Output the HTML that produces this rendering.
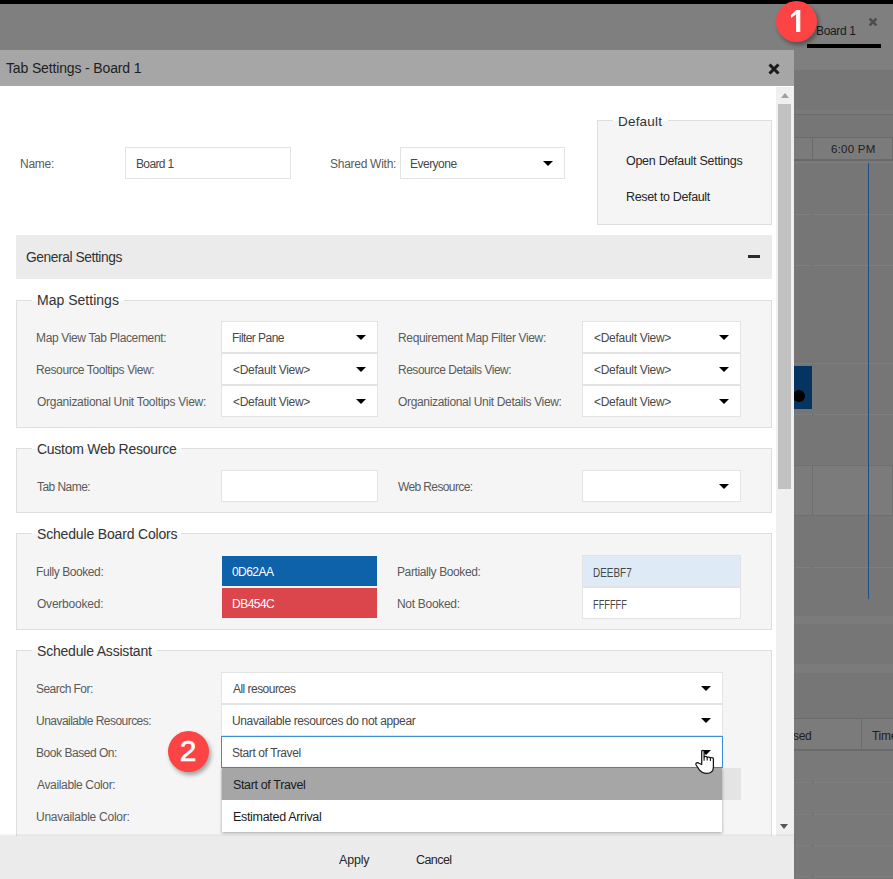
<!DOCTYPE html>
<html><head><meta charset="utf-8">
<style>
*{box-sizing:border-box;margin:0;padding:0}
html,body{width:893px;height:879px;overflow:hidden;background:#767676;font-family:"Liberation Sans",sans-serif;color:#333}
.a{position:absolute}
.t{position:absolute;white-space:nowrap;line-height:1}
.sel{position:absolute;background:#fff;border:1px solid #e3e3e3}
.arr{position:absolute;width:0;height:0;border-left:5px solid transparent;border-right:5px solid transparent;border-top:5px solid #000}
.fs{position:absolute;left:16px;width:756px;background:#f5f5f5;border:1px solid #dedede}
.gap{position:absolute;height:3px;background:#fff}
</style></head><body>
<!-- background board -->
<div class="a" style="left:0;top:0;width:893px;height:4px;background:#000"></div>
<div class="a" style="left:0;top:4px;width:893px;height:66px;background:#7f7f7f"></div>
<div class="a" style="left:794px;top:110px;width:99px;height:4px;background:#7a7a7a"></div>
<div class="a" style="left:794px;top:114px;width:99px;height:1px;background:#6c6c6c"></div>
<div class="a" style="left:794px;top:137px;width:99px;height:24px;background:#7b7b7b;border-top:1px solid #6a6a6a;border-bottom:2px solid #6a6a6a"></div>
<div class="a" style="left:812px;top:137px;width:1px;height:24px;background:#6a6a6a"></div>
<div class="a" style="left:892px;top:137px;width:1px;height:24px;background:#6a6a6a"></div>
<div class="a" style="left:794px;top:214px;width:99px;height:1px;background:#7e7e7e"></div><div class="a" style="left:812px;top:213px;width:1px;height:3px;background:#6e6e6e"></div>
<div class="a" style="left:794px;top:265px;width:99px;height:1px;background:#7e7e7e"></div><div class="a" style="left:812px;top:264px;width:1px;height:3px;background:#6e6e6e"></div>
<div class="a" style="left:794px;top:363px;width:99px;height:1px;background:#7e7e7e"></div><div class="a" style="left:812px;top:362px;width:1px;height:3px;background:#6e6e6e"></div>
<div class="a" style="left:794px;top:414px;width:99px;height:1px;background:#7e7e7e"></div><div class="a" style="left:812px;top:413px;width:1px;height:3px;background:#6e6e6e"></div>
<div class="a" style="left:794px;top:366px;width:18px;height:43px;background:#063461"></div>
<div class="a" style="left:793px;top:390px;width:12px;height:12px;border-radius:50%;background:#000"></div>
<div class="a" style="left:794px;top:465px;width:99px;height:51px;background:#7b7b7b;border-bottom:1px solid #6e6e6e;border-top:1px solid #707070"></div>
<div class="a" style="left:812px;top:465px;width:1px;height:51px;background:#6e6e6e"></div>
<div class="a" style="left:794px;top:567px;width:99px;height:1px;background:#7e7e7e"></div><div class="a" style="left:812px;top:566px;width:1px;height:3px;background:#6e6e6e"></div>
<div class="a" style="left:794px;top:616px;width:99px;height:8px;background:#7b7b7b"></div>
<div class="a" style="left:794px;top:664px;width:99px;height:9px;background:#7b7b7b"></div>
<div class="a" style="left:794px;top:750px;width:99px;height:129px;background:#797979"></div>
<div class="a" style="left:794px;top:718px;width:99px;height:33px;background:#7b7b7b;border-top:1px solid #6a6a6a;border-bottom:2px solid #6a6a6a"></div>
<div class="a" style="left:861px;top:718px;width:1px;height:33px;background:#6a6a6a"></div>
<div class="t" style="left:793px;top:730px;font-size:12px;letter-spacing:-0.3px;color:#1e1e1e">sed</div>
<div class="t" style="left:872px;top:730px;font-size:12px;letter-spacing:-0.3px;color:#1e1e1e">Time</div>
<div class="a" style="left:794px;top:782px;width:99px;height:1px;background:#7e7e7e"></div><div class="a" style="left:812px;top:781px;width:1px;height:3px;background:#6e6e6e"></div>
<div class="a" style="left:794px;top:814px;width:99px;height:1px;background:#7e7e7e"></div><div class="a" style="left:812px;top:813px;width:1px;height:3px;background:#6e6e6e"></div>
<div class="a" style="left:794px;top:845px;width:99px;height:1px;background:#7e7e7e"></div><div class="a" style="left:812px;top:844px;width:1px;height:3px;background:#6e6e6e"></div>
<div class="a" style="left:794px;top:876px;width:99px;height:1px;background:#7e7e7e"></div><div class="a" style="left:812px;top:875px;width:1px;height:3px;background:#6e6e6e"></div>
<div class="a" style="left:892px;top:465px;width:1px;height:51px;background:#6e6e6e"></div>
<div class="a" style="left:868px;top:162px;width:1px;height:437px;background:#1f4f80"></div>
<div class="a" style="left:794px;top:162px;width:99px;height:1px;background:#7e7e7e"></div>
<!-- tab -->
<svg class="a" style="left:868px;top:17px" width="10" height="10" viewBox="0 0 10 10"><path d="M1.6 1.6L8.4 8.4M8.4 1.6L1.6 8.4" stroke="#4d4d4d" stroke-width="2.6"/></svg>
<div class="a" style="left:807px;top:44px;width:74px;height:4px;background:#000"></div>

<!-- dialog -->
<div class="a" style="left:0;top:50px;width:794px;height:36px;background:#a6a6a6"></div>
<svg class="a" style="left:767px;top:62px" width="14" height="14" viewBox="0 0 14 14"><path d="M2.5 2.5L11.5 11.5M11.5 2.5L2.5 11.5" stroke="#1a1a1a" stroke-width="3"/></svg>
<div class="a" style="left:0;top:86px;width:794px;height:750px;background:#fff"></div>
<!-- scrollbar -->
<div class="a" style="left:776px;top:87px;width:18px;height:749px;background:#f0f0f0"></div>
<div class="arr" style="left:781px;top:93px;border-top:0;border-bottom:5px solid #a0a0a0;border-left-width:4px;border-right-width:4px"></div>
<div class="a" style="left:778px;top:104px;width:13px;height:385px;background:#c1c1c1"></div>
<div class="arr" style="left:780px;top:824px;border-top-color:#555;border-left-width:4px;border-right-width:4px"></div>

<!-- name row -->
<div class="sel" style="left:125px;top:147px;width:166px;height:32px"></div>
<div class="sel" style="left:400px;top:147px;width:165px;height:32px"><div class="arr" style="left:142px;top:13px"></div></div>

<!-- default fieldset -->
<div class="a" style="left:597px;top:120px;width:175px;height:105px;background:#f5f5f5;border:1px solid #dedede"></div>
<div class="gap" style="left:613px;top:120px;width:55px;height:1px"></div>

<!-- general settings -->
<div class="a" style="left:16px;top:235px;width:756px;height:44px;background:#ebebeb"></div>
<div class="a" style="left:748px;top:255px;width:12px;height:3px;background:#2a2a2a"></div>

<!-- Map settings -->
<div class="fs" style="top:300px;height:128px"></div>
<div class="gap" style="left:32px;top:300px;width:92px;height:1px"></div>
<div class="sel" style="left:221px;top:321px;width:157px;height:32px"><div class="arr" style="left:134px;top:13px"></div></div>
<div class="sel" style="left:221px;top:353px;width:157px;height:32px"><div class="arr" style="left:134px;top:13px"></div></div>
<div class="sel" style="left:221px;top:385px;width:157px;height:32px"><div class="arr" style="left:134px;top:13px"></div></div>
<div class="sel" style="left:582px;top:321px;width:159px;height:32px"><div class="arr" style="left:136px;top:13px"></div></div>
<div class="sel" style="left:582px;top:353px;width:159px;height:32px"><div class="arr" style="left:136px;top:13px"></div></div>
<div class="sel" style="left:582px;top:385px;width:159px;height:32px"><div class="arr" style="left:136px;top:13px"></div></div>

<!-- Custom web resource -->
<div class="fs" style="top:448px;height:65px"></div>
<div class="gap" style="left:32px;top:448px;width:149px;height:1px"></div>
<div class="sel" style="left:221px;top:470px;width:157px;height:32px"></div>
<div class="sel" style="left:582px;top:470px;width:159px;height:32px"><div class="arr" style="left:136px;top:13px"></div></div>

<!-- Schedule Board Colors -->
<div class="fs" style="top:533px;height:97px"></div>
<div class="gap" style="left:32px;top:533px;width:149px;height:1px"></div>
<div class="a" style="left:221px;top:555px;width:157px;height:32px;background:#0d62aa;border:1px solid #f4f4f4"></div>
<div class="a" style="left:221px;top:587px;width:157px;height:32px;background:#db454c;border:1px solid #f4f4f4"></div>
<div class="a" style="left:582px;top:555px;width:159px;height:32px;background:#deebf7;border:1px solid #e3e3e3"></div>
<div class="a" style="left:582px;top:587px;width:159px;height:32px;background:#fff;border:1px solid #e3e3e3"></div>

<!-- Schedule Assistant -->
<div class="fs" style="top:650px;height:220px"></div>
<div class="gap" style="left:32px;top:650px;width:125px;height:1px"></div>
<div class="sel" style="left:221px;top:672px;width:502px;height:32px"><div class="arr" style="left:479px;top:13px"></div></div>
<div class="sel" style="left:221px;top:704px;width:502px;height:32px"><div class="arr" style="left:479px;top:13px"></div></div>
<div class="a" style="left:221px;top:768px;width:520px;height:32px;background:#e4e4e4"></div>
<div class="sel" style="left:221px;top:736px;width:502px;height:32px;border-color:#3c8fd6"><div class="arr" style="left:479px;top:13px"></div></div>
<!-- dropdown list -->
<div class="a" style="left:222px;top:768px;width:500px;height:64px;background:#fff;box-shadow:0 1px 3px rgba(0,0,0,0.35)"></div>
<div class="a" style="left:222px;top:768px;width:500px;height:32px;background:#a6a6a6"></div>

<!-- footer -->
<div class="a" style="left:0;top:836px;width:794px;height:43px;background:#ebebeb;box-shadow:0 -1px 2px rgba(0,0,0,0.1)"></div>

<div class="t" style="left:6px;top:61px;font-size:14px;letter-spacing:-0.143px;color:#1e1e1e">Tab Settings - Board 1</div>
<div class="t" style="left:816px;top:25px;font-size:12px;letter-spacing:-0.333px;color:#1a1a1a">Board 1</div>
<div class="t" style="left:831px;top:144px;font-size:11.5px;letter-spacing:0.233px;color:#1e1e1e">6:00 PM</div>
<div class="t" style="left:20px;top:158px;font-size:12px;letter-spacing:-0.25px;color:#5a5a5a">Name:</div>
<div class="t" style="left:136px;top:158px;font-size:12px;letter-spacing:-0.633px;color:#484848">Board 1</div>
<div class="t" style="left:330px;top:158px;font-size:12px;letter-spacing:-0.273px;color:#5a5a5a">Shared With:</div>
<div class="t" style="left:410px;top:158px;font-size:12px;letter-spacing:-0.514px;color:#484848">Everyone</div>
<div class="t" style="left:618px;top:115px;font-size:13.5px;letter-spacing:0.2px;color:#333">Default</div>
<div class="t" style="left:626px;top:155px;font-size:12.5px;letter-spacing:-0.28px;color:#262626">Open Default Settings</div>
<div class="t" style="left:626px;top:191px;font-size:12.5px;letter-spacing:-0.36px;color:#262626">Reset to Default</div>
<div class="t" style="left:26px;top:251px;font-size:13.8px;letter-spacing:-0.426px;color:#333">General Settings</div>
<div class="t" style="left:37px;top:293px;font-size:14px;letter-spacing:0.019px;color:#333">Map Settings</div>
<div class="t" style="left:36px;top:332px;font-size:12px;letter-spacing:-0.354px;color:#5a5a5a">Map View Tab Placement:</div>
<div class="t" style="left:36px;top:364px;font-size:12px;letter-spacing:-0.409px;color:#5a5a5a">Resource Tooltips View:</div>
<div class="t" style="left:37px;top:396px;font-size:12px;letter-spacing:-0.273px;color:#5a5a5a">Organizational Unit Tooltips View:</div>
<div class="t" style="left:398px;top:332px;font-size:12px;letter-spacing:-0.355px;color:#5a5a5a">Requirement Map Filter View:</div>
<div class="t" style="left:398px;top:364px;font-size:12px;letter-spacing:-0.486px;color:#5a5a5a">Resource Details View:</div>
<div class="t" style="left:398px;top:396px;font-size:12px;letter-spacing:-0.331px;color:#5a5a5a">Organizational Unit Details View:</div>
<div class="t" style="left:232px;top:332px;font-size:12px;letter-spacing:-0.56px;color:#484848">Filter Pane</div>
<div class="t" style="left:233px;top:364px;font-size:12px;letter-spacing:-0.292px;color:#484848">&lt;Default View&gt;</div>
<div class="t" style="left:233px;top:396px;font-size:12px;letter-spacing:-0.292px;color:#484848">&lt;Default View&gt;</div>
<div class="t" style="left:594px;top:332px;font-size:12px;letter-spacing:-0.292px;color:#484848">&lt;Default View&gt;</div>
<div class="t" style="left:594px;top:364px;font-size:12px;letter-spacing:-0.292px;color:#484848">&lt;Default View&gt;</div>
<div class="t" style="left:594px;top:396px;font-size:12px;letter-spacing:-0.292px;color:#484848">&lt;Default View&gt;</div>
<div class="t" style="left:37px;top:442px;font-size:14px;letter-spacing:-0.266px;color:#333">Custom Web Resource</div>
<div class="t" style="left:37px;top:481px;font-size:12px;letter-spacing:-0.551px;color:#5a5a5a">Tab Name:</div>
<div class="t" style="left:398px;top:481px;font-size:12px;letter-spacing:-0.617px;color:#5a5a5a">Web Resource:</div>
<div class="t" style="left:37px;top:527px;font-size:14px;letter-spacing:-0.17px;color:#333">Schedule Board Colors</div>
<div class="t" style="left:36px;top:566px;font-size:12px;letter-spacing:-0.416px;color:#5a5a5a">Fully Booked:</div>
<div class="t" style="left:37px;top:598px;font-size:12px;letter-spacing:-0.22px;color:#5a5a5a">Overbooked:</div>
<div class="t" style="left:232px;top:566px;font-size:12px;letter-spacing:-0.56px;color:#fff">0D62AA</div>
<div class="t" style="left:232px;top:598px;font-size:12px;letter-spacing:-0.52px;color:#fff">DB454C</div>
<div class="t" style="left:397px;top:566px;font-size:12px;letter-spacing:-0.388px;color:#5a5a5a">Partially Booked:</div>
<div class="t" style="left:397px;top:598px;font-size:12px;letter-spacing:-0.3px;color:#5a5a5a">Not Booked:</div>
<div class="t" style="left:593px;top:567px;font-size:12px;transform:scaleX(0.829);transform-origin:0 0;color:#484848">DEEBF7</div>
<div class="t" style="left:593px;top:599px;font-size:12px;transform:scaleX(0.770);transform-origin:0 0;color:#484848">FFFFFF</div>
<div class="t" style="left:37px;top:644px;font-size:14px;letter-spacing:-0.2px;color:#333">Schedule Assistant</div>
<div class="t" style="left:36px;top:683px;font-size:12px;letter-spacing:-0.54px;color:#5a5a5a">Search For:</div>
<div class="t" style="left:36px;top:715px;font-size:12px;letter-spacing:-0.533px;color:#5a5a5a">Unavailable Resources:</div>
<div class="t" style="left:36px;top:747px;font-size:12px;letter-spacing:-0.461px;color:#5a5a5a">Book Based On:</div>
<div class="t" style="left:37px;top:779px;font-size:12px;letter-spacing:-0.347px;color:#5a5a5a">Available Color:</div>
<div class="t" style="left:36px;top:811px;font-size:12px;letter-spacing:-0.247px;color:#5a5a5a">Unavailable Color:</div>
<div class="t" style="left:233px;top:683px;font-size:12px;letter-spacing:-0.533px;color:#484848">All resources</div>
<div class="t" style="left:232px;top:715px;font-size:12px;letter-spacing:-0.365px;color:#484848">Unavailable resources do not appear</div>
<div class="t" style="left:232px;top:747px;font-size:12px;letter-spacing:-0.4px;color:#484848">Start of Travel</div>
<div class="t" style="left:233px;top:779px;font-size:12.5px;letter-spacing:-0.357px;color:#1a1a1a">Start of Travel</div>
<div class="t" style="left:233px;top:811px;font-size:12.5px;letter-spacing:-0.312px;color:#1a1a1a">Estimated Arrival</div>
<div class="t" style="left:339px;top:854px;font-size:12.5px;letter-spacing:-0.2px;color:#262626">Apply</div>
<div class="t" style="left:416px;top:854px;font-size:12.5px;letter-spacing:-0.56px;color:#262626">Cancel</div>

<!-- badges -->
<div class="a" style="left:776px;top:1px;width:41px;height:41px;border-radius:50%;background:#fd4444;box-shadow:2px 3px 4px rgba(0,0,0,0.35)"></div>
<svg class="a" style="left:780px;top:0" width="30" height="40" viewBox="780 0 30 40"><path d="M796.1 10L800.3 10L800.3 32L796.1 32L796.1 14.2L791.1 18L790.8 15.2Z" fill="#fff"/></svg>
<div class="a" style="left:168px;top:731px;width:41px;height:41px;border-radius:50%;background:#fd4444;box-shadow:2px 3px 4px rgba(0,0,0,0.35)"></div>
<div class="t" style="left:178px;top:736px;font-size:30px;color:#fff;width:20px;text-align:center;-webkit-text-stroke:0.6px #fff">2</div>

<!-- cursor -->
<svg class="a" style="left:690px;top:740px" width="35" height="40" viewBox="0 0 35 40"><path d="M11.7 24.5L11.7 11.5Q11.7 10.3 12.9 10.3Q14.1 10.3 14.1 11.5L14.1 17.6Q14.1 16.4 15.65 16.4Q17.2 16.4 17.2 17.6Q17.2 17 18.8 17Q20.4 17 20.4 18.2Q20.4 17.5 21.9 17.5Q23.4 17.5 23.4 18.7L23.4 27Q23.4 33.4 16.6 33.4Q12.2 33.4 9.2 29.6L6.1 25Q5.4 23.6 6.7 22.9Q7.9 22.3 9.4 23.5Z" fill="#fff" stroke="#141414" stroke-width="1.25" stroke-linejoin="round"/><path d="M14.1 17.6V20.8M17.2 17.6V20.6M20.4 18.2V21" stroke="#141414" stroke-width="1.1"/></svg>
</body></html>
